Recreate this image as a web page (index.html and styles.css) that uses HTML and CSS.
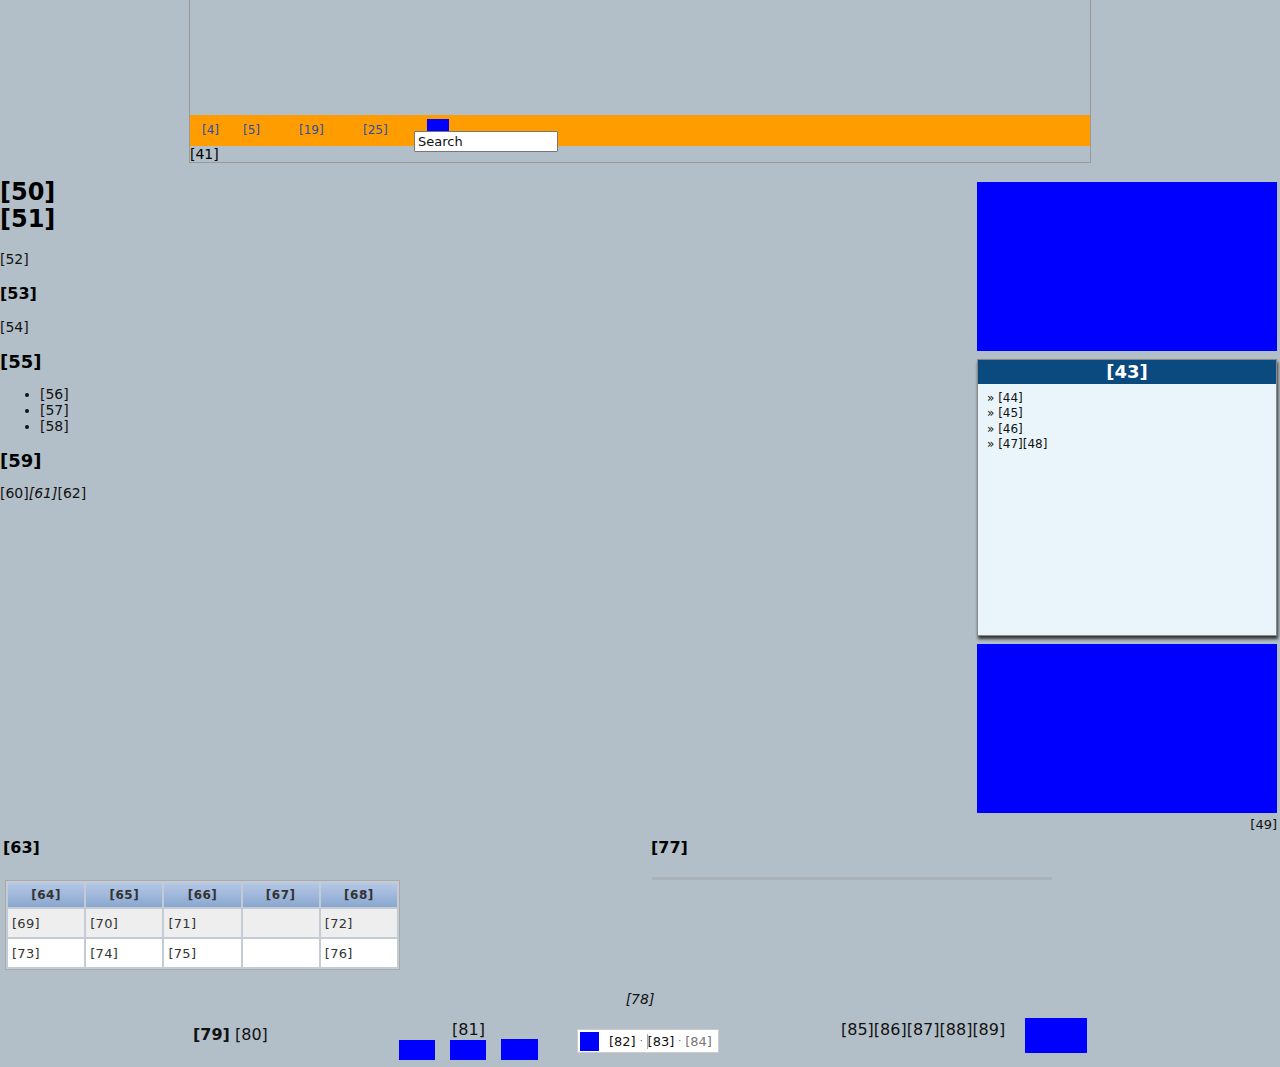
FILE: index.html
```html
<!DOCTYPE html>
<html>
<head>
<meta charset="utf-8">
<link rel="stylesheet" href="styles.css">
</head>
<body>
<div class="header">
  <div class="header-top"></div>
  <div class="navbar">
    <a class="nav-link w1" href="#">[4]</a>
    <a class="nav-link w2" href="#">[5]</a>
    <a class="nav-link w3" href="#">[19]</a>
    <a class="nav-link w4" href="#">[25]</a>
    <div class="search">
      <span class="search-btn"></span>
      <input class="search-input" type="text" value="Search">
    </div>
  </div>
  <div class="header-note">[41]</div>
</div>

<div class="main">
  <div class="content">
    <h1 class="title">[50]<br>[51]</h1>
    <p class="para p52">[52]</p>
    <h3 class="h3 h53">[53]</h3>
    <p class="para p54">[54]</p>
    <h2 class="h2 h55">[55]</h2>
    <ul class="list">
      <li>[56]</li>
      <li>[57]</li>
      <li>[58]</li>
    </ul>
    <h2 class="h2 h59">[59]</h2>
    <p class="para p60">[60]<em>[61]</em>[62]</p>
  </div>
  <div class="sidebar">
    <div class="ad"></div>
    <div class="box">
      <div class="box-head">[43]</div>
      <div class="box-body">
        <div>» [44]</div>
        <div>» [45]</div>
        <div>» [46]</div>
        <div>» [47][48]</div>
      </div>
    </div>
    <div class="ad"></div>
    <div class="side-note">[49]</div>
  </div>
</div>

<div class="lower">
  <div class="lower-left">
    <h3 class="h3">[63]</h3>
    <table class="grid">
      <thead>
        <tr><th>[64]</th><th>[65]</th><th>[66]</th><th>[67]</th><th>[68]</th></tr>
      </thead>
      <tbody>
        <tr class="odd"><td>[69]</td><td>[70]</td><td>[71]</td><td></td><td>[72]</td></tr>
        <tr class="even"><td>[73]</td><td>[74]</td><td>[75]</td><td></td><td>[76]</td></tr>
      </tbody>
    </table>
  </div>
  <div class="lower-right">
    <h3 class="h3">[77]</h3>
    <div class="rule"></div>
  </div>
</div>

<p class="caption"><em>[78]</em></p>

<div class="footer">
  <div class="f-a"><b>[79]</b> [80]</div>
  <div class="f-b">
    <div class="f-b-label">[81]</div>
    <div class="f-b-boxes"><span class="sq"></span><span class="sq"></span><span class="sq wide"></span></div>
  </div>
  <div class="f-c">
    <div class="pager"><span class="pager-sq"></span><span class="pg">[82]</span><span class="dot">·</span><span class="pg sep">[83]</span><span class="dot">·</span><span class="pg dim">[84]</span></div>
  </div>
  <div class="f-d">[85][86][87][88][89]</div>
  <div class="f-e"></div>
</div>
</body>
</html>
```

FILE: styles.css
```css
html, body {
  margin: 0;
  padding: 0;
}
body {
  background: #b3bfc8;
  font-family: "DejaVu Sans", sans-serif;
  font-size: 14px;
  color: #000;
}

/* header */
.header {
  width: 900px;
  margin: 0 auto;
  border: 1px solid #999;
  border-top: none;
}
.header-top {
  height: 115px;
}
.navbar {
  height: 31px;
  background: #ff9c00;
  display: flex;
  align-items: center;
  padding-left: 12px;
}
.nav-link {
  font-size: 12px;
  color: #2a4fa8;
  text-decoration: none;
  margin-top: -1px;
}
.w1 { width: 41px; }
.w2 { width: 56px; }
.w3 { width: 64px; }
.w4 { width: 51px; }
.search {
  align-self: flex-start;
  margin-top: 4px;
  display: flex;
  flex-direction: column;
  align-items: flex-start;
}
.search-btn {
  display: block;
  flex-shrink: 0;
  width: 22px;
  height: 12px;
  background: #0000ff;
  margin-left: 13px;
}
.search-input {
  flex-shrink: 0;
  width: 144px;
  height: 21px;
  box-sizing: border-box;
  border: 1px solid #777;
  border-radius: 1px;
  padding: 0 3px;
  font-family: "DejaVu Sans", sans-serif;
  font-size: 13px;
  color: #111;
  background: #fff;
  margin: 0;
}
.header-note {
  height: 16px;
  line-height: 16px;
  font-size: 14px;
}

/* main */
.main {
  display: flex;
  justify-content: space-between;
  padding-top: 16px;
}
.content {
  flex: 1;
}
.title {
  margin: 0;
  font-size: 24px;
  line-height: 27px;
  font-weight: bold;
}
.para {
  margin: 0;
  font-size: 14px;
  line-height: 16px;
  color: #111;
}
.p52 { margin-top: 18px; }
.p54 { margin-top: 16px; }
.p60 { margin-top: 14px; }
.h3 {
  margin: 0;
  font-size: 16px;
  line-height: 19px;
  font-weight: bold;
}
.h53 { margin-top: 17px; }
.h2 {
  margin: 0;
  font-size: 18px;
  line-height: 21px;
  font-weight: bold;
}
.h55 { margin-top: 16px; }
.h59 { margin-top: 16px; }
.list {
  margin: 14px 0 0;
  padding-left: 40px;
  font-size: 14px;
  line-height: 16px;
  color: #111;
}

.sidebar {
  width: 300px;
  margin-right: 3px;
  margin-top: 3px;
  display: flex;
  flex-direction: column;
  gap: 8px;
}
.ad {
  height: 169px;
  background: #0000ff;
}
.box {
  height: 275px;
  border: 1px solid #888;
  background: #eaf5fb;
  box-shadow: 1px 3px 3px #333;
}
.box-head {
  background: #0b4a7e;
  color: #fff;
  font-weight: bold;
  font-size: 18px;
  line-height: 24px;
  text-align: center;
}
.box-body {
  padding: 7px 9px 5px;
  font-size: 12px;
  line-height: 15.3px;
  color: #111;
}
.side-note {
  margin-top: -6px;
  text-align: right;
  font-size: 13px;
  line-height: 20px;
  color: #111;
}

/* lower */
.lower {
  display: flex;
  margin-top: 3px;
}
.lower-left {
  width: 648px;
  padding-left: 3px;
  box-sizing: border-box;
}
.lower-right {
  flex: 1;
  padding-left: 3px;
}
.grid {
  margin: 23px 0 0 2px;
  border-collapse: separate;
  border-spacing: 2px;
  background: #c3ccd4;
  border: 1px solid #aaa;
  width: 395px;
  font-size: 13px;
  color: #333;
}
.grid th {
  height: 24px;
  padding: 0;
  background: linear-gradient(#b5c8e6, #8aa7cf);
  font-size: 12px;
  font-weight: bold;
  letter-spacing: 0.5px;
  color: #333;
}
.grid td {
  height: 28px;
  padding: 0 0 0 4px;
  width: 73px;
  letter-spacing: 0.3px;
}
.grid .odd td { background: #eeeeee; }
.grid .even td { background: #ffffff; }
.rule {
  margin-top: 20px;
  margin-left: 1px;
  width: 400px;
  height: 3px;
  background: #aab2b9;
}

.caption {
  margin: 21px 0 0;
  text-align: center;
  font-size: 14px;
  line-height: 17px;
  color: #111;
}

/* footer */
.footer {
  display: flex;
  align-items: flex-start;
  padding-left: 193px;
  margin-top: 8px;
  font-size: 16px;
  color: #111;
}
.f-a {
  width: 206px;
  margin-top: 9px;
  line-height: 19px;
}
.f-b {
  width: 178px;
  margin-top: 4px;
}
.f-b-label {
  width: 139px;
  text-align: center;
  line-height: 19px;
}
.f-b-boxes {
  display: flex;
  align-items: flex-end;
  gap: 15px;
  height: 21px;
}
.sq {
  width: 36px;
  height: 20px;
  background: #0000ff;
}
.sq.wide {
  width: 37px;
  height: 21px;
}
.f-c {
  width: 264px;
  margin-top: 13px;
}
.pager {
  display: inline-flex;
  align-items: center;
  width: 142px;
  height: 24px;
  box-sizing: border-box;
  background: #fff;
  border: 1px solid #ccc;
  padding-left: 2px;
  font-size: 13px;
}
.pager-sq {
  width: 19px;
  height: 19px;
  background: #0000ff;
  margin-right: 10px;
}
.pg { color: #111; }
.pg.sep { border-left: 1px solid #aaa; }
.pg.dim { color: #777; }
.dot {
  color: #2233aa;
  font-size: 9px;
  margin: 0 4px;
}
.f-d {
  width: 184px;
  margin-top: 4px;
  line-height: 19px;
}
.f-e {
  width: 62px;
  height: 35px;
  margin-top: 2px;
  background: #0000ff;
}
```
